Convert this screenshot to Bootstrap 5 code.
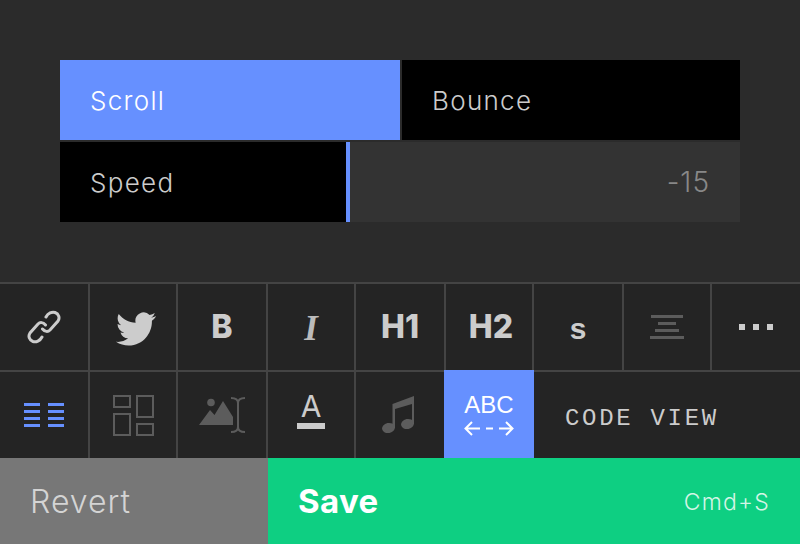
<!DOCTYPE html>
<html lang="en">
<head>
<meta charset="utf-8">
<title>Editor</title>
<link href="https://cdn.jsdelivr.net/npm/bootstrap@5.3.0/dist/css/bootstrap.min.css" rel="stylesheet">
<style>
html,body{height:100%;margin:0}
body{background:#2b2b2b;font-family:Inter,"Liberation Sans",sans-serif;color:#ccc;overflow:hidden}
.stage{width:800px;height:544px}
.upper{height:282px;padding:60px}
.opt-grid{display:grid;grid-template-columns:340px 338px;grid-template-rows:80px 80px;gap:2px}
.opt{background:#000;font-size:26px;font-weight:350;letter-spacing:1.3px;padding-left:30px;color:#ccc}
.opt-on{background:#6690ff;color:#fff}
.range-row{grid-column:1 / 3;background:#333}
.range-fill{width:290px;background:#000;border-right:4px solid #6690ff;height:100%;font-size:26px;font-weight:350;letter-spacing:1.3px;padding-left:30px}
.range-val{font-size:28px;font-weight:350;letter-spacing:1px;color:#888;padding-right:30px}
.tools{height:176px;background:#444;padding-top:2px;display:grid;grid-template-columns:88px 86px 88px 86px 88px 86px 88px 86px 88px;grid-template-rows:86px 86px;gap:2px}
.tool{background:#242424;color:#ccc}
.t-b{font-size:32px;font-weight:800;line-height:1}
.nudge-h2{padding-left:4px}
.t-i{font-family:"Liberation Serif",serif;font-style:italic;font-weight:700;font-size:35px;line-height:1;padding-top:2px;color:#bbb}
.t-s{font-family:"Liberation Mono",monospace;font-weight:700;font-size:30px;line-height:1;padding-top:8px}
.t-a{font-size:30px;font-weight:400;line-height:1}
.a-bar{width:28px;height:6px;background:#ccc;margin-top:2px;margin-bottom:11px}
.t-abc{grid-column:6;background:#6690ff;color:#fff;font-family:"Liberation Sans",sans-serif;font-size:24px;line-height:1;margin:-2px -2px 0 -2px}
.t-code{grid-column:7 / 10;font-family:"Liberation Mono",monospace;font-size:24px;letter-spacing:2.7px;padding-left:31px;padding-top:8px;color:#ccc}
.nudge-bird{padding:4px 0 0 6px}
.nudge-note{padding-right:4px}
.actions{height:86px}
.act-revert{width:268px;background:#777;color:#d4d4d4;font-size:32px;font-weight:350;letter-spacing:1px;padding-left:30px;padding-top:2px}
.act-save{background:#0ecf82;color:#fff;padding:2px 30px 0}
.save-label{font-size:33px;font-weight:700;letter-spacing:.4px}
.save-key{font-size:23px;font-weight:350;letter-spacing:1.2px;color:#d4f5e6}
</style>
</head>
<body>
<div class="stage d-flex flex-column">
  <div class="upper">
    <div class="opt-grid">
      <div class="opt opt-on d-flex align-items-center">Scroll</div>
      <div class="opt d-flex align-items-center">Bounce</div>
      <div class="range-row d-flex align-items-center justify-content-between">
        <div class="range-fill d-flex align-items-center">Speed</div>
        <div class="range-val">-15</div>
      </div>
    </div>
  </div>
  <div class="tools">
    <div class="tool d-flex align-items-center justify-content-center">
      <svg width="34" height="34" viewBox="0 0 34 34" fill="none" stroke="#ccc" stroke-width="3" stroke-linecap="round"><path d="M19 7 C21 3 25 1.500 28 2.500 C32 4 33 8 31 11 L23 20 C21 22 18 22 15.500 19"/><path d="M15 27 C13 31 9 32.500 6 31.500 C2 30 1 26 3 23 L11 14 C13 12 16 12 18.500 15"/></svg>
    </div>
    <div class="tool nudge-bird d-flex align-items-center justify-content-center">
      <svg width="40" height="34" viewBox="0 0 24 20" preserveAspectRatio="none" fill="#ccc"><path d="M23.953 2.57a10 10 0 01-2.825.775 4.958 4.958 0 002.163-2.723c-.951.555-2.005.959-3.127 1.184a4.92 4.92 0 00-8.384 4.482C7.69 6.095 4.067 4.13 1.64 1.162a4.822 4.822 0 00-.666 2.475c0 1.71.87 3.213 2.188 4.096a4.904 4.904 0 01-2.228-.616v.06a4.923 4.923 0 003.946 4.827 4.996 4.996 0 01-2.212.085 4.936 4.936 0 004.604 3.417 9.867 9.867 0 01-6.102 2.105c-.39 0-.779-.023-1.17-.067a13.995 13.995 0 007.557 2.209c9.053 0 13.998-7.496 13.998-13.985 0-.21 0-.42-.015-.63A9.935 9.935 0 0024 2.59z"/></svg>
    </div>
    <div class="tool t-b d-flex align-items-center justify-content-center">B</div>
    <div class="tool t-i d-flex align-items-center justify-content-center">I</div>
    <div class="tool t-b d-flex align-items-center justify-content-center">H1</div>
    <div class="tool t-b nudge-h2 d-flex align-items-center justify-content-center">H2</div>
    <div class="tool t-s d-flex align-items-center justify-content-center">s</div>
    <div class="tool d-flex align-items-center justify-content-center">
      <svg width="34" height="24" viewBox="0 0 34 24" fill="#5c5c5c"><rect x="1" y="0" width="32" height="3"/><rect x="8" y="7" width="18" height="3"/><rect x="5" y="14" width="24" height="3"/><rect x="0" y="21" width="34" height="3"/></svg>
    </div>
    <div class="tool d-flex align-items-center justify-content-center">
      <svg width="34" height="6" viewBox="0 0 34 6" fill="#ccc"><rect x="0" width="6" height="6"/><rect x="14" width="6" height="6"/><rect x="28" width="6" height="6"/></svg>
    </div>

    <div class="tool d-flex align-items-center justify-content-center">
      <svg width="40" height="24" viewBox="0 0 40 24" fill="#6690ff"><rect width="16" height="3"/><rect y="7" width="16" height="3"/><rect y="14" width="16" height="3"/><rect y="21" width="16" height="3"/><rect x="24" width="16" height="3"/><rect x="24" y="7" width="16" height="3"/><rect x="24" y="14" width="16" height="3"/><rect x="24" y="21" width="16" height="3"/></svg>
    </div>
    <div class="tool d-flex align-items-center justify-content-center">
      <svg width="41" height="41" viewBox="0 0 41 41" fill="none" stroke="#5c5c5c" stroke-width="2"><rect x="1" y="1" width="16" height="11"/><rect x="24" y="1" width="16" height="21"/><rect x="1" y="19" width="16" height="21"/><rect x="24" y="29" width="16" height="11"/></svg>
    </div>
    <div class="tool d-flex align-items-center justify-content-center">
      <svg width="46" height="36" viewBox="0 0 46 36" fill="#5c5c5c"><circle cx="12" cy="5.500" r="3.800"/><path d="M0 28 L11 13 L15.500 18 L24 4 L34 20 L34 28 Z"/><path d="M32 1 C35 1 39 2 39 6 L39 30 C39 34 35 35 32 35 M46 1 C43 1 39 2 39 6 M39 30 C39 34 43 35 46 35" fill="none" stroke="#5c5c5c" stroke-width="2"/></svg>
    </div>
    <div class="tool d-flex flex-column align-items-center justify-content-center">
      <div class="t-a">A</div>
      <div class="a-bar"></div>
    </div>
    <div class="tool nudge-note d-flex align-items-center justify-content-center">
      <svg width="32" height="38" viewBox="0 0 32 38" fill="#5c5c5c"><ellipse cx="6.500" cy="32" rx="6.500" ry="5" transform="rotate(-12 6.500 32)"/><ellipse cx="25.500" cy="28" rx="6.500" ry="5" transform="rotate(-12 25.500 28)"/><path d="M10.500 8 L32 0 L32 28 L30 28 L30 8 L13 13 L13 32 L10.500 32 Z"/></svg>
    </div>
    <div class="tool t-abc d-flex flex-column align-items-center justify-content-center">
      <div>ABC</div>
      <svg class="mt-1" width="50" height="15" viewBox="0 0 50 15" fill="none" stroke="#fff" stroke-width="2"><path d="M8 1 L1.500 7.500 L8 14 M1.500 7.500 H16 M22 7.500 H29 M35 7.500 H48.500 M42 1 L48.500 7.500 L42 14"/></svg>
    </div>
    <div class="tool t-code d-flex align-items-center">CODE VIEW</div>
  </div>
  <div class="actions d-flex">
    <div class="act-revert d-flex align-items-center">Revert</div>
    <div class="act-save flex-grow-1 d-flex align-items-center justify-content-between">
      <span class="save-label">Save</span>
      <span class="save-key">Cmd+S</span>
    </div>
  </div>
</div>
<script src="https://cdn.jsdelivr.net/npm/bootstrap@5.3.0/dist/js/bootstrap.bundle.min.js"></script>
</body>
</html>
